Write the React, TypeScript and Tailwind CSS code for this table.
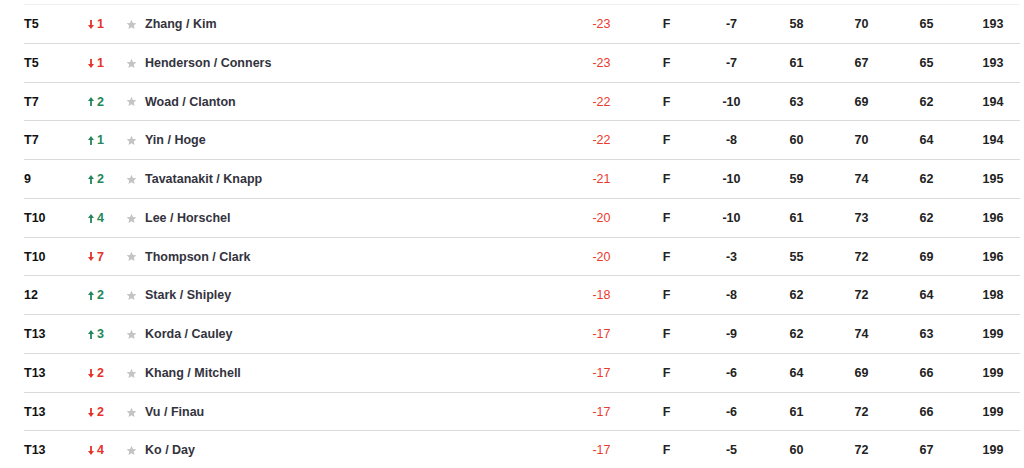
import React from 'react';

interface Row {
  pos: string;
  move: number;
  name: string;
  score: string;
  thru: string;
  today: string;
  r1: string;
  r2: string;
  r3: string;
  total: string;
}

const rows: Row[] = [
  { pos: 'T5', move: -1, name: 'Zhang / Kim', score: '-23', thru: 'F', today: '-7', r1: '58', r2: '70', r3: '65', total: '193' },
  { pos: 'T5', move: -1, name: 'Henderson / Conners', score: '-23', thru: 'F', today: '-7', r1: '61', r2: '67', r3: '65', total: '193' },
  { pos: 'T7', move: 2, name: 'Woad / Clanton', score: '-22', thru: 'F', today: '-10', r1: '63', r2: '69', r3: '62', total: '194' },
  { pos: 'T7', move: 1, name: 'Yin / Hoge', score: '-22', thru: 'F', today: '-8', r1: '60', r2: '70', r3: '64', total: '194' },
  { pos: '9', move: 2, name: 'Tavatanakit / Knapp', score: '-21', thru: 'F', today: '-10', r1: '59', r2: '74', r3: '62', total: '195' },
  { pos: 'T10', move: 4, name: 'Lee / Horschel', score: '-20', thru: 'F', today: '-10', r1: '61', r2: '73', r3: '62', total: '196' },
  { pos: 'T10', move: -7, name: 'Thompson / Clark', score: '-20', thru: 'F', today: '-3', r1: '55', r2: '72', r3: '69', total: '196' },
  { pos: '12', move: 2, name: 'Stark / Shipley', score: '-18', thru: 'F', today: '-8', r1: '62', r2: '72', r3: '64', total: '198' },
  { pos: 'T13', move: 3, name: 'Korda / Cauley', score: '-17', thru: 'F', today: '-9', r1: '62', r2: '74', r3: '63', total: '199' },
  { pos: 'T13', move: -2, name: 'Khang / Mitchell', score: '-17', thru: 'F', today: '-6', r1: '64', r2: '69', r3: '66', total: '199' },
  { pos: 'T13', move: -2, name: 'Vu / Finau', score: '-17', thru: 'F', today: '-6', r1: '61', r2: '72', r3: '66', total: '199' },
  { pos: 'T13', move: -4, name: 'Ko / Day', score: '-17', thru: 'F', today: '-5', r1: '60', r2: '72', r3: '67', total: '199' },
];

function Arrow({ up }: { up: boolean }) {
  return (
    <svg width="6" height="9" viewBox="0 0 6 9" className={up ? '' : 'rotate-180'}>
      <path d="M3 0 L6 4 L3.9 4 L3.9 9 L2.1 9 L2.1 4 L0 4 Z" fill="currentColor" />
    </svg>
  );
}

function Star() {
  return (
    <svg width="11" height="11" viewBox="0 0 24 24">
      <path
        d="M12 1.5l3.1 7.1 7.7.7-5.8 5.1 1.7 7.6L12 18l-6.7 4 1.7-7.6L1.2 9.3l7.7-.7z"
        fill="#c4c4c4"
      />
    </svg>
  );
}

export default function App() {
  return (
    <div className="w-[1024px] h-[468px] overflow-hidden bg-white pt-[4px] pl-[24px] font-['Liberation_Sans',Arial,sans-serif] text-[12.5px]">
      <div className="w-[996px] border-t border-[#eef0f4]">
        {rows.map((r, i) => {
          const up = r.move > 0;
          return (
            <div
              key={i}
              className="flex items-center h-[38.78px] pt-[1px] border-b border-[#dadada]"
            >
              <div className="w-[62px] font-bold text-[#111]">{r.pos}</div>
              <div
                className={`w-[40px] flex items-center gap-[3px] pl-[2px] font-bold ${
                  up ? 'text-[#23875a]' : 'text-[#e5322b]'
                }`}
              >
                <Arrow up={up} />
                <span>{Math.abs(r.move)}</span>
              </div>
              <div className="w-[19px] flex items-center">
                <Star />
              </div>
              <div className="w-[424px] font-bold text-[#33333d]">{r.name}</div>
              <div className="w-[65px] text-center text-[#ea3a2e]">{r.score}</div>
              <div className="w-[65px] text-center font-bold text-[#222]">{r.thru}</div>
              <div className="w-[65px] text-center font-bold text-[#222]">{r.today}</div>
              <div className="w-[65px] text-center font-bold text-[#222]">{r.r1}</div>
              <div className="w-[65px] text-center font-bold text-[#222]">{r.r2}</div>
              <div className="w-[65px] text-center font-bold text-[#222]">{r.r3}</div>
              <div className="w-[61px] pl-[7px] text-center font-bold text-[#222]">{r.total}</div>
            </div>
          );
        })}
      </div>
    </div>
  );
}
